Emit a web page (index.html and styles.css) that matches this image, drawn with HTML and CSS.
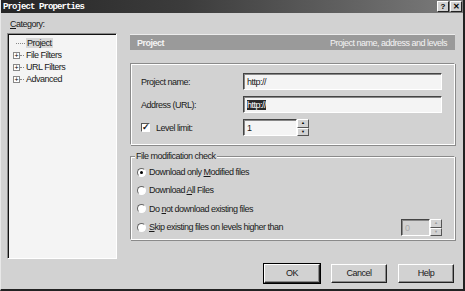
FILE: index.html
```html
<!DOCTYPE html>
<html lang="en">
<head>
    <meta charset="UTF-8">
    <title>Project Properties</title>
    <link rel="stylesheet" href="styles.css">
</head>
<body>
    <div class="window">
        <div class="titlebar">
            <span class="title">Project Properties</span>
            <div class="title-buttons">
                <span class="tbtn">?</span>
                <span class="tbtn">✕</span>
            </div>
        </div>

        <div class="content">
            <div class="left">
                <div class="cat-label"><u>C</u>ategory:</div>
                <div class="tree">
                    <div class="node leaf"><span class="dash"></span><span class="sel">Project</span></div>
                    <div class="node"><span class="plus">+</span><span class="dash short"></span>File Filters</div>
                    <div class="node"><span class="plus">+</span><span class="dash short"></span>URL Filters</div>
                    <div class="node"><span class="plus">+</span><span class="dash short"></span>Advanced</div>
                </div>
            </div>

            <div class="right">
                <div class="header">
                    <span class="header-title">Project</span>
                    <span class="header-desc">Project name, address and levels</span>
                </div>

                <div class="group plain">
                    <div class="row">
                        <span class="label">Project name:</span>
                        <span class="input wide">http://</span>
                    </div>
                    <div class="row">
                        <span class="label">Address (URL):</span>
                        <span class="input wide"><span class="selected-text">http://</span></span>
                    </div>
                    <div class="row">
                        <span class="label check-label"><span class="checkbox">✓</span>Level limit:</span>
                        <span class="spinner">
                            <span class="input short">1</span>
                            <span class="spin"><span class="arrow">▲</span><span class="arrow">▼</span></span>
                        </span>
                    </div>
                </div>

                <div class="group framed">
                    <span class="legend">File modification check</span>
                    <div class="radio-row"><span class="radio on"></span><span>Download only <u>M</u>odified files</span></div>
                    <div class="radio-row"><span class="radio"></span><span>Download <u>A</u>ll Files</span></div>
                    <div class="radio-row"><span class="radio"></span><span>Do <u>n</u>ot download existing files</span></div>
                    <div class="radio-row">
                        <span class="radio"></span><span><u>S</u>kip existing files on levels higher than</span>
                        <span class="spinner disabled">
                            <span class="input tiny">0</span>
                            <span class="spin"><span class="arrow">▲</span><span class="arrow">▼</span></span>
                        </span>
                    </div>
                </div>
            </div>
        </div>

        <div class="buttons">
            <span class="button default">OK</span>
            <span class="button">Cancel</span>
            <span class="button">Help</span>
        </div>
    </div>
</body>
</html>
```

FILE: styles.css
```css
:root {
    --face: #d2d2d2;
    --light: #f4f4f4;
    --shadow: #8a8a8a;
    --dark: #222;
}

body {
    margin: 0;
    background: var(--face);
    font-family: "Liberation Sans", Arial, sans-serif;
    font-size: 9px;
    letter-spacing: -0.5px;
    color: #1a1a1a;
}

.window {
    width: 465px;
    height: 291px;
    box-sizing: border-box;
    border-left: 1px solid #e8e8e8;
    border-right: 2px solid var(--dark);
    border-bottom: 2px solid var(--dark);
    display: flex;
    flex-direction: column;
    overflow: hidden;
}

.titlebar {
    height: 13px;
    flex: none;
    background: linear-gradient(to right, #262626, #3c3c3c 40%, #7c7c7c);
    display: flex;
    align-items: center;
    justify-content: space-between;
    padding: 0 1px 0 2px;
}

.title {
    font-family: "Liberation Mono", monospace;
    font-weight: bold;
    font-size: 9px;
    letter-spacing: -0.9px;
    color: #fff;
}

.title-buttons {
    display: flex;
    gap: 1px;
}

.tbtn {
    width: 10px;
    height: 9px;
    background: var(--face);
    border: 1px solid;
    border-color: #fff #222 #222 #fff;
    font-size: 8px;
    font-weight: bold;
    letter-spacing: 0;
    line-height: 9px;
    text-align: center;
    color: #000;
}

.content {
    display: flex;
    gap: 13px;
    padding: 4px 8px 5px 6px;
    height: 251px;
    box-sizing: border-box;
}

.left {
    width: 110px;
    display: flex;
    flex-direction: column;
}

.cat-label {
    padding: 2px 0 0 3px;
    height: 14px;
}

.tree {
    flex: 1;
    background: var(--light);
    border: 1px solid;
    border-color: var(--shadow) #fff #fff var(--shadow);
    box-shadow: inset 1px 1px 0 #111;
    padding: 3px 0 0 5px;
}

.node {
    height: 12px;
    display: flex;
    align-items: center;
}

.plus {
    width: 7px;
    height: 7px;
    box-sizing: border-box;
    border: 1px solid #888;
    background: #fff;
    font-size: 7px;
    letter-spacing: 0;
    line-height: 5px;
    text-align: center;
    color: #000;
}

.dash {
    width: 12px;
    border-top: 1px dotted #888;
    margin-right: 1px;
}

.dash.short {
    width: 4px;
    margin-right: 2px;
}

.leaf .dash {
    margin-left: 3px;
    width: 9px;
}

.sel {
    background: #d8d8d8;
    padding: 0 1px;
}

.right {
    flex: 1;
    display: flex;
    flex-direction: column;
    padding-top: 17px;
}

.header {
    height: 15px;
    flex: none;
    background: #9a9a9a;
    border-top: 1px solid #ececec;
    display: flex;
    align-items: center;
    justify-content: space-between;
    padding: 0 8px 0 7px;
    color: #f4f4f4;
}

.header-title {
    font-weight: bold;
}

.group {
    border: 1px solid;
    border-color: var(--shadow) #fff #fff var(--shadow);
    box-shadow: inset 1px 1px 0 #fff, 1px 1px 0 var(--shadow);
}

.group.plain {
    margin-top: 13px;
    height: 82px;
    box-sizing: border-box;
    padding: 9px 12px 0 10px;
    display: flex;
    flex-direction: column;
    gap: 6px;
}

.row {
    display: flex;
    align-items: center;
    height: 17px;
}

.label {
    width: 102px;
}

.check-label {
    display: flex;
    align-items: center;
}

.checkbox {
    width: 9px;
    height: 9px;
    box-sizing: border-box;
    border: 1px solid;
    border-color: #555 #fff #fff #555;
    background: #fff;
    font-size: 9px;
    letter-spacing: 0;
    line-height: 7px;
    font-weight: bold;
    text-align: center;
    margin-right: 6px;
}

.input {
    height: 17px;
    box-sizing: border-box;
    background: var(--light);
    border: 1px solid;
    border-color: #444 #fff #fff #444;
    box-shadow: inset 1px 1px 0 #888;
    padding: 2px 3px;
    line-height: 12px;
}

.input.wide {
    flex: 1;
}

.selected-text {
    background: #2a2a2a;
    color: #fff;
}

.spinner {
    display: flex;
    height: 17px;
}

.input.short {
    width: 54px;
}

.spin {
    display: flex;
    flex-direction: column;
    width: 12px;
}

.arrow {
    flex: 1;
    background: var(--face);
    border: 1px solid;
    border-color: #fff #555 #555 #fff;
    font-size: 4px;
    letter-spacing: 0;
    line-height: 6px;
    text-align: center;
    color: #000;
}

.group.framed {
    margin-top: 11px;
    height: 84px;
    box-sizing: border-box;
    position: relative;
    padding: 6px 12px 0 6px;
}

.legend {
    position: absolute;
    top: -6px;
    left: 4px;
    background: var(--face);
    padding: 0 1px;
}

.radio-row {
    display: flex;
    align-items: center;
    height: 18.3px;
}

.radio {
    width: 9px;
    height: 9px;
    box-sizing: border-box;
    border-radius: 50%;
    border: 1px solid;
    border-color: #666 #fff #fff #666;
    background: #fff;
    margin-right: 3px;
    display: flex;
    align-items: center;
    justify-content: center;
}

.radio.on::after {
    content: '';
    width: 3px;
    height: 3px;
    border-radius: 50%;
    background: #000;
}

.spinner.disabled {
    margin-left: auto;
    margin-top: 1px;
}

.input.tiny {
    width: 29px;
    background: var(--face);
    color: #aaa;
}

.disabled .arrow {
    color: #999;
}

.buttons {
    display: flex;
    justify-content: flex-end;
    gap: 11px;
    padding-right: 9px;
}

.button {
    width: 56px;
    height: 19px;
    box-sizing: border-box;
    border: 1px solid;
    border-color: #fff #222 #222 #fff;
    box-shadow: inset -1px -1px 0 var(--shadow);
    text-align: center;
    line-height: 17px;
}

.button.default {
    outline: 1px solid #000;
}
```
